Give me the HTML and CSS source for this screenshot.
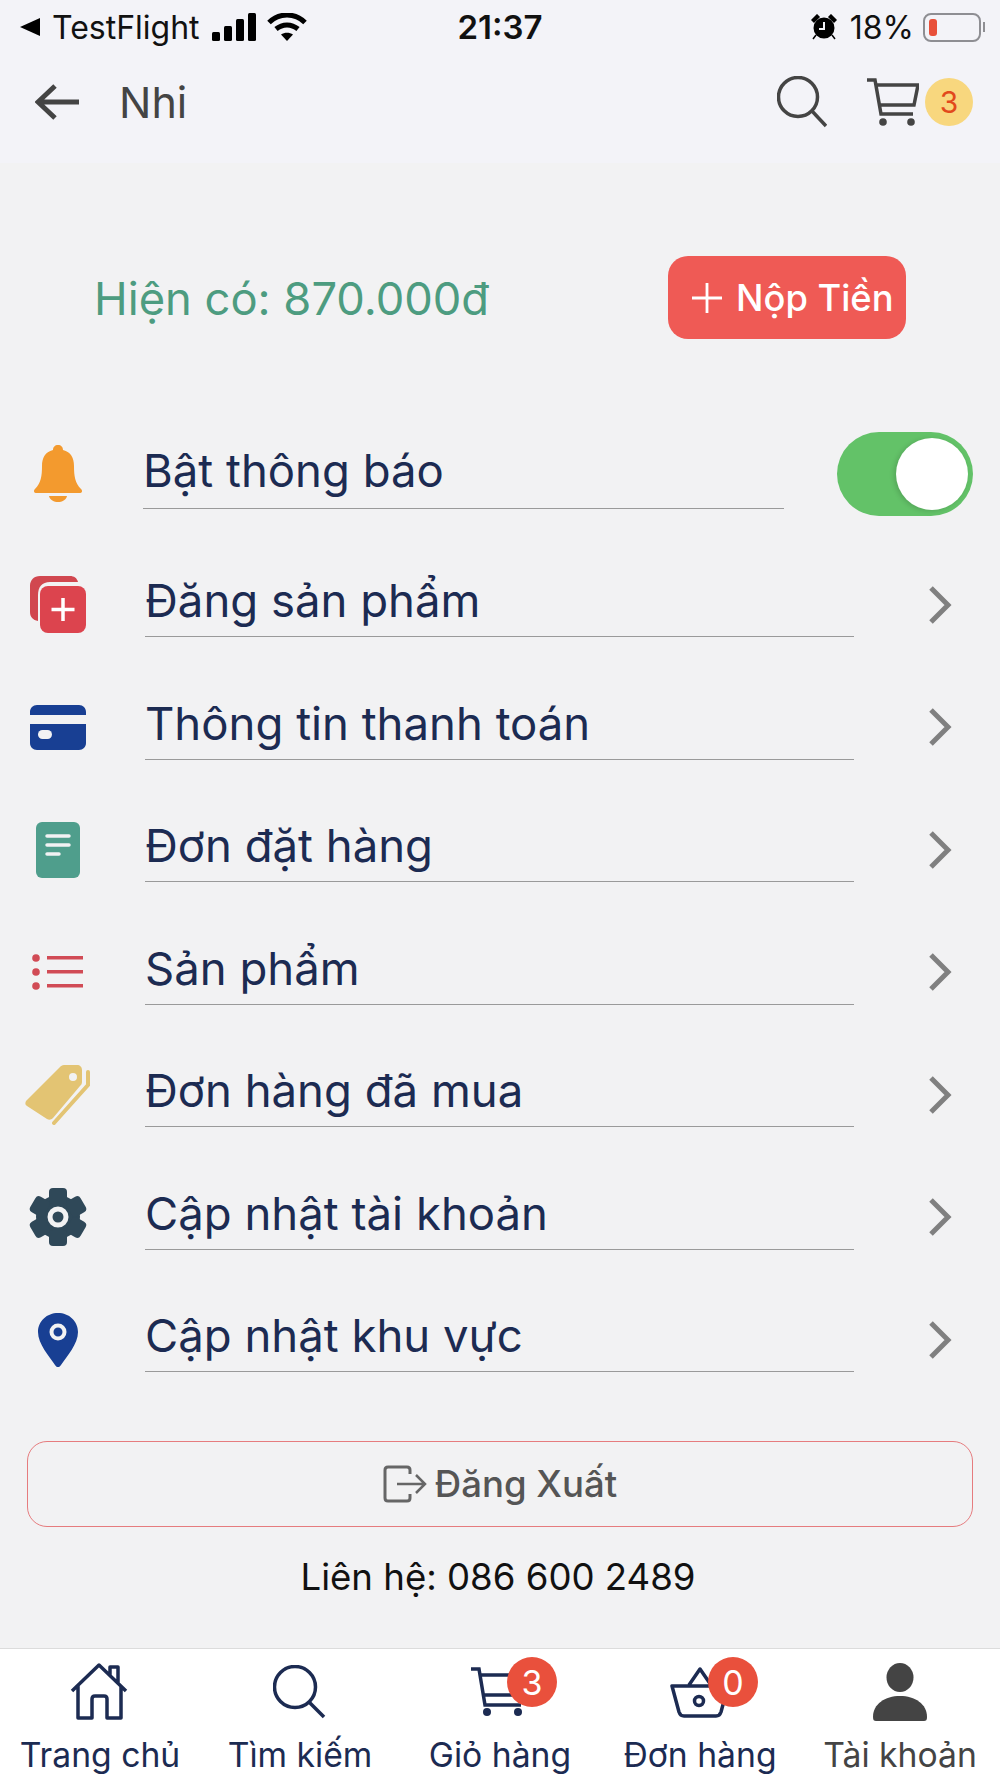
FILE: index.html
```html
<!DOCTYPE html>
<html lang="vi">
<head>
    <meta charset="UTF-8">
    <meta name="viewport" content="width=device-width, initial-scale=1.0">
    <title>Nhi</title>
    <link rel="stylesheet" href="styles.css">
</head>
<body>
    <div class="top">
        <div class="status">
            <div class="status-left">
                <svg class="st-back" viewBox="0 0 20 20"><path d="M0 10 20 1v18z" fill="#000"/></svg>
                <span class="st-app">TestFlight</span>
                <svg class="st-signal" viewBox="0 0 44 28"><rect x="0" y="19" width="8" height="9" rx="1.5"/><rect x="12" y="13" width="8" height="15" rx="1.5"/><rect x="24" y="6" width="8" height="22" rx="1.5"/><rect x="36" y="0" width="8" height="28" rx="1.5"/></svg>
                <svg class="st-wifi" viewBox="0 0 40 28"><path d="M2 9.500C12-.5 28-.5 38 9.500" fill="none" stroke="#000" stroke-width="5"/><path d="M9 16c6.500-5.500 15.500-5.500 22 0" fill="none" stroke="#000" stroke-width="5"/><path d="M14 21.500c3.500-2.500 8.500-2.500 12 0L20 28z" fill="#000"/></svg>
            </div>
            <div class="st-time">21:37</div>
            <div class="status-right">
                <svg class="st-alarm" viewBox="0 0 26 26"><circle cx="13" cy="14" r="10.500"/><path d="M1 6l5-5 2 2-5 5zM25 6l-5-5-2 2 5 5zM5 21l-3 4M21 21l3 4" stroke="#000" stroke-width="1.500"/><path d="M13 8v7H8" fill="none" stroke="#f3f3f8" stroke-width="2"/></svg>
                <span class="st-pct">18%</span>
                <div class="battery"><div class="battery-level"></div></div>
                <div class="battery-nub"></div>
            </div>
        </div>
        <header class="header">
            <svg class="hd-back" viewBox="0 0 44 36"><path d="M44 18H3M20 2 3 18l17 16" fill="none" stroke="#444" stroke-width="5"/></svg>
            <h1 class="hd-title">Nhi</h1>
            <svg class="hd-search" viewBox="0 0 50 52"><circle cx="21" cy="21" r="19.500" fill="none" stroke="#444" stroke-width="3.500"/><path d="M35 35l14 15" stroke="#444" stroke-width="3.500" fill="none"/></svg>
            <svg class="hd-cart" viewBox="0 0 52 48"><path d="M0 2h8l6 34h32M10 7h41l-4 20H13" fill="none" stroke="#444" stroke-width="3.500"/><circle cx="16" cy="44" r="3.800" fill="#444"/><circle cx="44" cy="44" r="3.800" fill="#444"/></svg>
            <span class="hd-badge">3</span>
        </header>
    </div>

    <main class="main">
        <section class="balance">
            <div class="balance-text">Hiện có: 870.000đ</div>
            <button class="deposit">
                <svg class="deposit-plus" viewBox="0 0 32 32"><path d="M16 0v32M0 16h32" stroke="#fff" stroke-width="3"/></svg>
                <span>Nộp Tiền</span>
            </button>
        </section>

        <div class="menu">
            <div class="row row-toggle">
                <div class="row-icon">
                    <svg width="48" height="57" viewBox="0 0 48 57"><path d="M24 0c3 0 5 2 5 5 8 2 11 8 11 16 0 10 1 17 7 23 2 2 1 4-2 4H3c-3 0-4-2-2-4 6-6 7-13 7-23 0-8 3-14 11-16 0-3 2-5 5-5z" fill="#f39a2e"/><path d="M15 51h18c-1 4-5 6-9 6s-8-2-9-6z" fill="#f39a2e"/></svg>
                </div>
                <div class="row-label">Bật thông báo</div>
                <div class="switch"><div class="knob"></div></div>
            </div>
            <div class="row">
                <div class="row-icon">
                    <svg width="56" height="57" viewBox="0 0 56 57"><path d="M8 45C3 44 0 41 0 36V10C0 4 4 0 10 0h30c4 0 7 2 8 6H20C12 6 8 11 8 19z" fill="#d1474f"/><rect x="10" y="10" width="46" height="47" rx="8" fill="#dc444e"/><path d="M33 22v23M21.500 33.500h23" stroke="#fff" stroke-width="3.500"/></svg>
                </div>
                <div class="row-label">Đăng sản phẩm</div>
                <svg class="chevron" viewBox="0 0 24 40"><path d="M3 3l17 17L3 37" fill="none" stroke="#808080" stroke-width="5"/></svg>
            </div>
            <div class="row">
                <div class="row-icon">
                    <svg width="56" height="45" viewBox="0 0 56 45"><path d="M0 10V7c0-4 3-7 7-7h42c4 0 7 3 7 7v3zM0 19h56v19c0 4-3 7-7 7H7c-4 0-7-3-7-7z" fill="#183f93"/><rect x="8" y="25" width="14" height="9" rx="4.500" fill="#f2f2f3"/></svg>
                </div>
                <div class="row-label">Thông tin thanh toán</div>
                <svg class="chevron" viewBox="0 0 24 40"><path d="M3 3l17 17L3 37" fill="none" stroke="#808080" stroke-width="5"/></svg>
            </div>
            <div class="row">
                <div class="row-icon">
                    <svg width="44" height="56" viewBox="0 0 44 56"><rect width="44" height="56" rx="6" fill="#4f9e8c"/><path d="M11 14h22M11 23h22M11 32h12" stroke="#f2f2f3" stroke-width="3.500" stroke-linecap="round"/></svg>
                </div>
                <div class="row-label">Đơn đặt hàng</div>
                <svg class="chevron" viewBox="0 0 24 40"><path d="M3 3l17 17L3 37" fill="none" stroke="#808080" stroke-width="5"/></svg>
            </div>
            <div class="row">
                <div class="row-icon">
                    <svg width="52" height="36" viewBox="0 0 52 36"><g fill="#d14b55"><circle cx="4" cy="4" r="3.800"/><circle cx="4" cy="18" r="3.800"/><circle cx="4" cy="32" r="3.800"/><rect x="15" y="2" width="36" height="3.500"/><rect x="15" y="16" width="36" height="3.500"/><rect x="15" y="30" width="36" height="3.500"/></g></svg>
                </div>
                <div class="row-label">Sản phẩm</div>
                <svg class="chevron" viewBox="0 0 24 40"><path d="M3 3l17 17L3 37" fill="none" stroke="#808080" stroke-width="5"/></svg>
            </div>
            <div class="row">
                <div class="row-icon">
                    <svg width="66" height="60" viewBox="0 0 66 60"><path d="M1 36 35 2c1-1 2-2 4-2h13c3 0 5 2 5 5v12c0 2-1 3-2 4L28 53c-2 2-4 2-6 1L2 41c-2-1-2-3-1-5zM44 12a4 4 0 1 0 8 0 4 4 0 1 0-8 0z" fill="#e3c473" fill-rule="evenodd"/><path d="M63 7v13L29 58" fill="none" stroke="#e3c473" stroke-width="4" stroke-linecap="round"/></svg>
                </div>
                <div class="row-label">Đơn hàng đã mua</div>
                <svg class="chevron" viewBox="0 0 24 40"><path d="M3 3l17 17L3 37" fill="none" stroke="#808080" stroke-width="5"/></svg>
            </div>
            <div class="row">
                <div class="row-icon">
                    <svg width="58" height="58" viewBox="0 0 58 58">
                        <g fill="#2f4858">
                            <circle cx="29" cy="29" r="22"/>
                            <rect x="20" y="0" width="18" height="16" rx="4"/>
                            <rect x="20" y="0" width="18" height="16" rx="4" transform="rotate(60 29 29)"/>
                            <rect x="20" y="0" width="18" height="16" rx="4" transform="rotate(120 29 29)"/>
                            <rect x="20" y="0" width="18" height="16" rx="4" transform="rotate(180 29 29)"/>
                            <rect x="20" y="0" width="18" height="16" rx="4" transform="rotate(240 29 29)"/>
                            <rect x="20" y="0" width="18" height="16" rx="4" transform="rotate(300 29 29)"/>
                        </g>
                        <circle cx="29" cy="29" r="8" fill="none" stroke="#f2f2f3" stroke-width="5"/>
                    </svg>
                </div>
                <div class="row-label">Cập nhật tài khoản</div>
                <svg class="chevron" viewBox="0 0 24 40"><path d="M3 3l17 17L3 37" fill="none" stroke="#808080" stroke-width="5"/></svg>
            </div>
            <div class="row">
                <div class="row-icon">
                    <svg width="40" height="54" viewBox="0 0 40 54"><path d="M20 0c11 0 20 8 20 19 0 12-11 24-17 33-2 3-4 3-6 0C11 43 0 31 0 19 0 8 9 0 20 0z" fill="#183f93"/><circle cx="20" cy="19" r="6.500" fill="none" stroke="#f2f2f3" stroke-width="4"/></svg>
                </div>
                <div class="row-label">Cập nhật khu vực</div>
                <svg class="chevron" viewBox="0 0 24 40"><path d="M3 3l17 17L3 37" fill="none" stroke="#808080" stroke-width="5"/></svg>
            </div>
        </div>

        <button class="logout">
            <svg class="logout-icon" viewBox="0 0 44 38"><path d="M27 9V5c0-2-1-3-3-3H5C3 2 2 3 2 5v28c0 2 1 3 3 3h19c2 0 3-1 3-3v-4" fill="none" stroke="#666" stroke-width="3"/><path d="M14 19h28M33 10l9 9-9 9" fill="none" stroke="#666" stroke-width="2.500"/></svg>
            <span>Đăng Xuất</span>
        </button>
        <div class="contact">Liên hệ: 086 600 2489</div>
    </main>

    <nav class="tabs">
        <div class="tab">
            <div class="tab-icon">
                <svg width="60" height="58" viewBox="0 0 60 58"><path d="M2 28 29 2l27 26M8 23v32h14V36c0-2 1-3 3-3h9c2 0 3 1 3 3v19h14V23M40 12V4h8v17" fill="none" stroke="#1c2b52" stroke-width="3.500" stroke-linejoin="round"/></svg>
            </div>
            <span class="tab-label">Trang chủ</span>
        </div>
        <div class="tab">
            <div class="tab-icon">
                <svg width="54" height="54" viewBox="0 0 54 54"><circle cx="22" cy="22" r="20.500" fill="none" stroke="#1c2b52" stroke-width="3.500"/><path d="M36 37l15 15" stroke="#1c2b52" stroke-width="3.500"/></svg>
            </div>
            <span class="tab-label">Tìm kiếm</span>
        </div>
        <div class="tab">
            <div class="tab-icon">
                <svg width="58" height="50" viewBox="0 0 58 50"><path d="M0 2h8l6 36h36M10 8h46l-5 20H13" fill="none" stroke="#1c2b52" stroke-width="3.500"/><circle cx="16" cy="45" r="4" fill="#1c2b52"/><circle cx="47" cy="45" r="4" fill="#1c2b52"/></svg>
                <span class="tab-badge">3</span>
            </div>
            <span class="tab-label">Giỏ hàng</span>
        </div>
        <div class="tab">
            <div class="tab-icon">
                <svg width="60" height="52" viewBox="0 0 60 52"><path d="M2 20h56l-7 26c-1 3-3 4-5 4H14c-2 0-4-1-5-4zM19 19 30 3l11 16" fill="none" stroke="#1c2b52" stroke-width="3.500" stroke-linejoin="round"/><circle cx="29" cy="35" r="4.500" fill="none" stroke="#1c2b52" stroke-width="3.500"/></svg>
                <span class="tab-badge">0</span>
            </div>
            <span class="tab-label">Đơn hàng</span>
        </div>
        <div class="tab tab-active">
            <div class="tab-icon">
                <svg width="54" height="58" viewBox="0 0 54 58"><ellipse cx="27" cy="14.500" rx="13.500" ry="14.500" fill="#444"/><path d="M0 54c0-13 12-21 27-21s27 8 27 21c0 3-1 4-3 4H3c-2 0-3-1-3-4z" fill="#444"/></svg>
            </div>
            <span class="tab-label">Tài khoản</span>
        </div>
    </nav>
</body>
</html>
```

FILE: styles.css
```css
* {
    box-sizing: border-box;
}

body {
    font-family: Inter, "Liberation Sans", sans-serif;
    background-color: #f2f2f3;
    color: #1c2b52;
    margin: 0;
    width: 1000px;
    height: 1778px;
    display: flex;
    flex-direction: column;
    overflow: hidden;
}

button {
    font-family: inherit;
    cursor: pointer;
}

/* status bar and title bar share one tint */
.top {
    background: #f3f3f8;
    height: 163px;
    flex-shrink: 0;
}

.status {
    height: 54px;
    display: grid;
    grid-template-columns: 1fr auto 1fr;
    align-items: center;
    color: #111;
    font-size: 32px;
}

.status-left {
    display: flex;
    align-items: center;
    padding-left: 20px;
}

.status-right {
    display: flex;
    align-items: center;
    justify-content: flex-end;
    padding-right: 15px;
}

.st-back {
    width: 20px;
    height: 20px;
    margin-right: 12px;
}

.st-signal {
    width: 44px;
    height: 28px;
    margin-left: 12px;
}

.st-wifi {
    width: 40px;
    height: 28px;
    margin-left: 11px;
}

.st-time {
    font-size: 33px;
    font-weight: 600;
}

.st-alarm {
    width: 26px;
    height: 26px;
    margin-right: 13px;
}

.st-pct {
    margin-right: 9px;
}

.battery {
    width: 58px;
    height: 29px;
    border: 2px solid #8e8e93;
    border-radius: 8px;
    padding: 4px;
}

.battery-level {
    width: 8px;
    height: 100%;
    background: #e8503a;
    border-radius: 3px;
}

.battery-nub {
    width: 2px;
    height: 10px;
    margin-left: 2px;
    background: #8e8e93;
}

.header {
    display: flex;
    align-items: center;
    height: 96px;
    padding: 0 27px 0 35px;
}

.hd-back {
    width: 44px;
    height: 36px;
}

.hd-title {
    margin: 0 auto 0 40px;
    font-size: 43px;
    font-weight: 400;
    color: #444;
}

.hd-search {
    width: 50px;
    height: 52px;
}

.hd-cart {
    width: 52px;
    height: 48px;
    margin-left: 40px;
}

.hd-badge {
    width: 48px;
    height: 48px;
    margin-left: 6px;
    border-radius: 50%;
    background: #f8d77e;
    color: #e2491c;
    font-size: 30px;
    display: flex;
    align-items: center;
    justify-content: center;
}

.main {
    flex: 1;
    padding: 93px 27px 0 0;
}

.balance {
    display: flex;
    align-items: center;
    justify-content: space-between;
    padding: 0 67px 0 94px;
}

.balance-text {
    font-size: 45.300px;
    line-height: 58px;
    padding-top: 2px;
    color: #4d9c80;
}

.deposit {
    width: 238px;
    height: 83px;
    border: none;
    border-radius: 20px;
    background: #ef5a55;
    color: #fff;
    font-size: 36.300px;
    font-weight: 500;
    display: flex;
    align-items: center;
    gap: 14px;
    padding: 0 0 0 24px;
    white-space: nowrap;
}

.deposit-plus {
    width: 30px;
    height: 30px;
    flex-shrink: 0;
}

.menu {
    display: flex;
    flex-direction: column;
    gap: 57.500px;
    margin-top: 98.500px;
}

.row {
    display: flex;
    align-items: center;
    height: 65px;
}

.row-toggle {
    height: 71px;
    margin-bottom: 6px;
}

.row-icon {
    width: 116px;
    display: flex;
    justify-content: center;
    flex-shrink: 0;
}

.row-label {
    width: 709px;
    height: 100%;
    margin-left: 29px;
    border-bottom: 1px solid #9a9a9a;
    font-size: 45.500px;
    line-height: 57px;
    white-space: nowrap;
}

.row-toggle .row-label {
    width: 642px;
    margin-left: 27px;
    line-height: 66px;
}

.chevron {
    width: 24px;
    height: 40px;
    margin-left: 74px;
}

.switch {
    width: 136px;
    height: 84px;
    margin-left: 53px;
    border-radius: 42px;
    background: #63c268;
    padding: 6px 5px;
    display: flex;
    justify-content: flex-end;
    position: relative;
    top: 1px;
}

.knob {
    width: 72px;
    height: 72px;
    border-radius: 50%;
    background: #fff;
    box-shadow: -2px 1px 5px rgba(0, 0, 0, 0.15);
}

.logout {
    width: 946px;
    height: 86px;
    margin: 69px 0 0 27px;
    border: 1px solid #e67c7e;
    border-radius: 20px;
    background: transparent;
    color: #555;
    font-size: 36.600px;
    font-weight: 500;
    display: flex;
    align-items: center;
    justify-content: center;
    gap: 8px;
}

.logout-icon {
    width: 44px;
    height: 38px;
}

.contact {
    margin: 28px 0 0 25px;
    width: 946px;
    text-align: center;
    font-size: 36.600px;
    color: #111;
}

.tabs {
    height: 130px;
    flex-shrink: 0;
    background: #fff;
    border-top: 1px solid #dcdcdc;
    display: grid;
    grid-template-columns: repeat(5, 200px);
}

.tab {
    display: flex;
    flex-direction: column;
    align-items: center;
}

.tab-icon {
    position: relative;
    height: 58px;
    margin-top: 14px;
    margin-bottom: 12px;
    display: flex;
    align-items: center;
}

.tab-label {
    font-size: 33.700px;
    line-height: 44px;
    color: #1c2b52;
    white-space: nowrap;
}

.tab-active .tab-label {
    color: #444;
}

.tab-badge {
    position: absolute;
    top: -6px;
    right: -28px;
    width: 50px;
    height: 50px;
    border-radius: 50%;
    background: #e9503c;
    color: #fff;
    font-size: 34px;
    display: flex;
    align-items: center;
    justify-content: center;
}
```
